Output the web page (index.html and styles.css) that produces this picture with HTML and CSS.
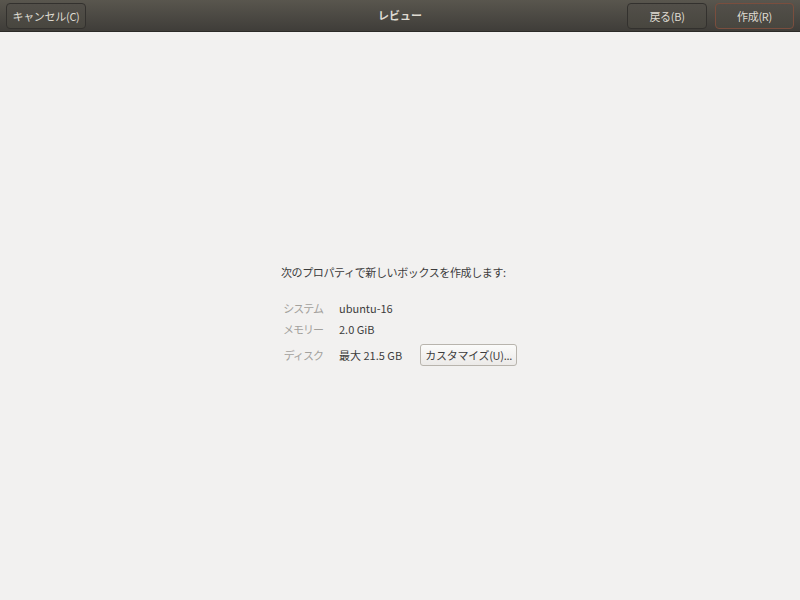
FILE: index.html
```html
<!DOCTYPE html>
<html lang="ja">
<head>
<meta charset="utf-8">
<link rel="stylesheet" href="styles.css">
</head>
<body>
<div class="window">
  <header class="headerbar">
    <div class="hb-start"><button class="hb-btn">キャンセル(C)</button></div>
    <div class="hb-title">レビュー</div>
    <div class="hb-end">
      <button class="hb-btn">戻る(B)</button>
      <button class="hb-btn suggested">作成(R)</button>
    </div>
  </header>
  <main class="content">
    <div class="review">
      <p class="intro">次のプロパティで新しいボックスを作成します:</p>
      <div class="props">
        <span class="label">システム</span><span class="value">ubuntu-16</span>
        <span class="label">メモリー</span><span class="value">2.0 GiB</span>
        <span class="label row-disk">ディスク</span>
        <span class="value row-disk disk"><span>最大 21.5 GB</span><button class="btn">カスタマイズ(U)...</button></span>
      </div>
    </div>
  </main>
</div>
</body>
</html>
```
FILE: styles.css
```css
* { box-sizing: border-box; }
html, body { margin: 0; padding: 0; }
body {
  width: 800px;
  height: 600px;
  background: #f2f1f0;
  font-family: "Noto Sans CJK JP", "Noto Sans", "DejaVu Sans", sans-serif;
  font-size: 11px;
  color: #3c3c3c;
  overflow: hidden;
}
.window { display: flex; flex-direction: column; height: 600px; }
.headerbar {
  height: 32px;
  flex: none;
  display: flex;
  align-items: center;
  justify-content: space-between;
  padding: 0 6px;
  background: linear-gradient(#59564e, #3f3d39);
  border-bottom: 1px solid #2b2a27;
  position: relative;
}
.hb-start, .hb-end { display: flex; gap: 8px; }
.hb-title {
  position: absolute;
  left: 0; right: 0; top: 0; bottom: 1px;
  display: flex;
  align-items: center;
  justify-content: center;
  color: #dfdbd2;
  font-weight: bold;
  font-size: 11px;
  pointer-events: none;
}
.hb-btn {
  height: 26px;
  width: 80px;
  border: 1px solid #33312e;
  border-radius: 4px;
  background: linear-gradient(#524f49, #48463f);
  color: #dfdbd2;
  font-family: inherit;
  font-size: 11px;
  letter-spacing: -0.3px;
  padding: 0;
}
.hb-btn.suggested { width: 79px; border-color: #7a4e3e; }
.content {
  flex: 1;
  display: flex;
  justify-content: center;
  padding-top: 230px;
}
.review { width: 240px; margin-left: 2px; }
.intro { margin: 0 0 16px 0; line-height: 20px; white-space: nowrap; letter-spacing: -0.38px; }
.props {
  display: grid;
  grid-template-columns: 42px auto;
  column-gap: 16px;
  row-gap: 1px;
  align-items: center;
}
.label { color: #a3a19d; text-align: right; line-height: 20px; white-space: nowrap; letter-spacing: -1px; }
.value { line-height: 20px; white-space: nowrap; }
.row-disk { margin-top: 4px; }
.disk { display: flex; align-items: center; gap: 18px; }
.btn {
  height: 22px;
  width: 97px;
  border: 1px solid #b8b4ad;
  border-radius: 3px;
  background: linear-gradient(#fbfbfa, #eceae8);
  color: #3c3c3c;
  font-family: inherit;
  font-size: 11px;
  letter-spacing: -0.3px;
  padding: 0;
}
```
